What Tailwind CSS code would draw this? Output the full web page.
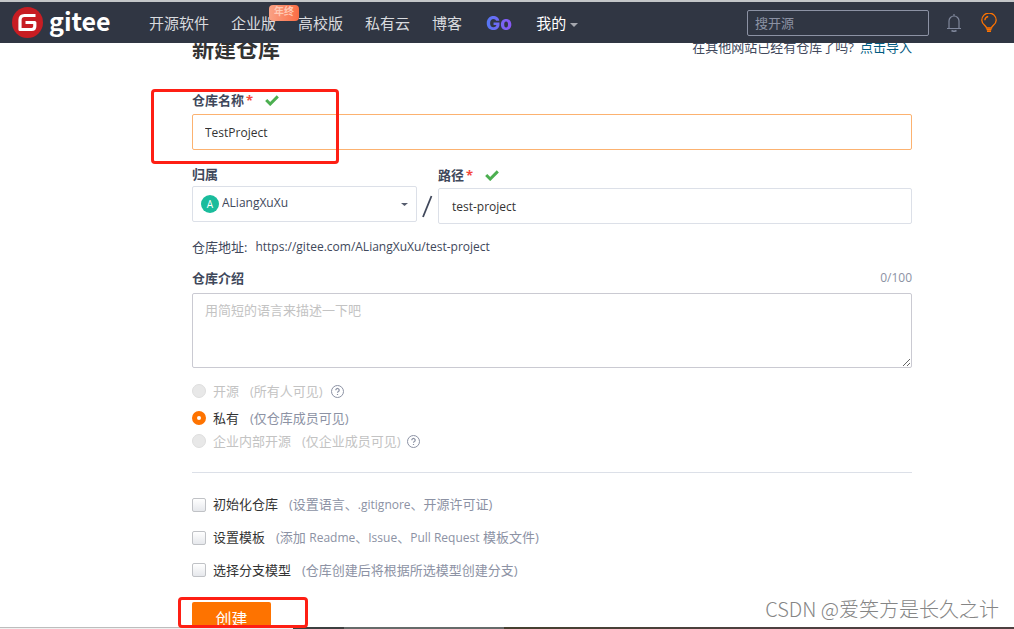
<!DOCTYPE html>
<html lang="zh-CN">
<head>
<meta charset="utf-8">
<meta name="viewport" content="width=device-width, initial-scale=1">
<title>新建仓库 - Gitee</title>
<script src="https://cdn.jsdelivr.net/npm/@tailwindcss/browser@4"></script>
</head>
<body class="relative h-screen overflow-hidden bg-white font-['Open_Sans','Noto_Sans_CJK_SC',sans-serif] text-[13px] leading-5 text-[#40485b]">

<header class="fixed inset-x-0 top-0 z-10 flex h-[43px] items-center border-t-2 border-[#c3c6c8] bg-[#303643] pr-[17px] pl-3 text-[15px] text-[#d9dbdf]">
  <a href="#" class="flex w-[137px] shrink-0 items-center gap-1.5 text-white" aria-label="gitee">
    <svg class="size-[31px]" viewBox="0 0 31 31" aria-hidden="true"><circle cx="15.500" cy="15.500" r="15.500" fill="#c71d23"/><path d="M23.500 8.500H12.500Q8 8.500 8 13V22.500H19.500Q22.800 22.500 22.800 19.200V15.500H13.500" fill="none" stroke="#fff" stroke-width="3.200" stroke-linejoin="round"/></svg>
    <span class="pb-1.5 font-['Noto_Sans_CJK_SC',sans-serif] text-[25px] leading-8 font-bold">gitee</span>
  </a>
  <nav class="flex items-center gap-[22px] whitespace-nowrap">
    <a href="#">开源软件</a>
    <a href="#" class="relative">企业版<span class="absolute -top-2 left-[38px] flex h-4 w-[30px] items-center justify-center rounded-sm bg-linear-to-r from-[#f9a184] to-[#fa6c43] pb-1 text-[10px] leading-none font-bold text-[#ffc9b4]">年终</span></a>
    <a href="#">高校版</a>
    <a href="#">私有云</a>
    <a href="#">博客</a>
    <a href="#" class="mx-0.5 bg-linear-to-r from-[#5078f4] to-[#8a55f5] bg-clip-text pt-0.5 font-[Inter,sans-serif] text-[19px] font-extrabold text-transparent">Go</a>
    <a href="#" class="flex items-center gap-1 text-white">我的<svg class="mt-1 h-1 w-2" viewBox="0 0 8 4" aria-hidden="true"><path d="M0 0h8L4 4z" fill="#a5a8af"/></svg></a>
  </nav>
  <div class="ml-auto flex items-center">
    <input type="search" aria-label="搜开源" placeholder="搜开源" class="h-[26px] w-[182px] rounded-xs border border-[#8c92a4] bg-transparent px-[7px] text-[13px] text-white placeholder:text-[#8c92a4]">
    <button type="button" aria-label="通知" class="ml-[17px]"><svg class="h-[18px] w-4" viewBox="0 0 16 18" fill="none" stroke="#7f879b" stroke-width="1.200" aria-hidden="true"><path d="M8 0v2M1 14.500h14M3 14.500V7a5 5 0 0 1 10 0v7.500"/><path d="M5.500 16.500q2.500 1.500 5 0" stroke-width="1.600"/></svg></button>
    <button type="button" aria-label="提示" class="ml-[19px]"><svg class="h-5 w-4" viewBox="0 0 16 20" fill="none" stroke="#fe7300" stroke-width="1.300" aria-hidden="true"><path d="M5.500 15c0-2-4.700-3.500-4.700-7.800a7.200 7.200 0 0 1 14.400 0c0 4.300-4.700 5.800-4.700 7.800zM3.800 7.200a4.200 4.200 0 0 1 3.400-3.700"/><path d="M5.500 16.500h5M6 18.300h4" stroke-width="1.500"/></svg></button>
  </div>
</header>

<main class="mr-[102px] ml-48 pt-[33px]">
  <div class="flex h-[30px] items-center justify-between">
    <h1 class="text-[22px] leading-[30px] font-bold text-[#333]">新建仓库</h1>
    <p class="flex gap-1.5 pb-0.5">在其他网站已经有仓库了吗? <a href="#" class="text-[#005980]">点击导入</a></p>
  </div>

  <form onsubmit="return false">
    <div class="relative mt-[27px]">
      <div class="flex items-center">
        <label for="name" class="flex gap-0.5 font-bold">仓库名称 <span class="text-[#f5483b]">*</span></label>
        <svg class="ml-3 h-[11px] w-[14px]" viewBox="0 0 14 11" fill="none" stroke="#4caf50" stroke-width="3" aria-hidden="true"><path d="M1.200 5l4 4L12.800 1.400"/></svg>
      </div>
      <input id="name" value="TestProject" class="mt-1 block h-9 w-full rounded-xs border border-[#fcb270] px-3 text-[12px] text-[#333]">
      <div class="pointer-events-none absolute -top-px -left-[41px] h-[75px] w-[188px] rounded-sm border-3 border-[#fe1f14]"></div>
    </div>

    <div class="mt-3.5 flex">
      <div class="w-[225px] shrink-0">
        <label for="owner" class="block font-bold">归属</label>
        <div class="relative mt-0.5">
          <select id="owner" class="h-9 w-full appearance-none rounded-xs border border-[#dce0e8] bg-white pr-6 pb-0.5 pl-[29px] text-[12px]"><option>ALiangXuXu</option></select>
          <span class="pointer-events-none absolute top-[9px] left-[9px] flex size-[18px] items-center justify-center rounded-full bg-[#1abc9c] text-[10px] leading-none text-white">A</span>
          <svg class="pointer-events-none absolute top-[17px] right-[9px] h-[3px] w-[7px]" viewBox="0 0 7 3" aria-hidden="true"><path d="M0 0h7L3.500 3z" fill="#565d6e"/></svg>
        </div>
      </div>
      <svg class="mt-[31px] h-[24px] w-[21px] shrink-0" viewBox="0 0 21 24" aria-hidden="true"><path d="M14.500 1L6 22" stroke="#40485b" stroke-width="1.800"/></svg>
      <div class="flex-1 pt-px">
        <div class="flex items-center">
          <label for="path" class="flex gap-0.5 font-bold">路径 <span class="text-[#f5483b]">*</span></label>
          <svg class="ml-3 h-[11px] w-[14px]" viewBox="0 0 14 11" fill="none" stroke="#4caf50" stroke-width="3" aria-hidden="true"><path d="M1.200 5l4 4L12.800 1.400"/></svg>
        </div>
        <input id="path" value="test-project" class="mt-[3px] block h-9 w-full rounded-xs border border-[#dce0e8] px-[13px] text-[12px] text-[#333]">
      </div>
    </div>

    <p class="mt-[13px] flex">仓库地址:<span class="ml-2 text-[12px]">https://gitee.com/ALiangXuXu/test-project</span></p>

    <div class="mt-[11px] flex items-end justify-between">
      <label for="intro" class="font-bold">仓库介绍</label>
      <span class="text-[12px] text-[#8c92a4]">0/100</span>
    </div>
    <textarea id="intro" placeholder="用简短的语言来描述一下吧" class="mt-[5px] block h-[75px] w-full resize-y rounded-xs border border-[#cacad2] px-3 py-1.5 placeholder:text-[#c3c3c3]"></textarea>

    <div class="mt-[13px] flex items-center text-[#c3c3c3]">
      <input type="radio" name="access" id="open" disabled class="size-3.5 appearance-none rounded-full border border-[#dedede] bg-[#e8e8e8]">
      <label for="open" class="ml-[7px] flex gap-[11px]"><span>开源</span><span>(所有人可见)</span></label>
      <svg class="ml-2 size-[13px]" viewBox="0 0 13 13" fill="none" stroke="#8c92a4" aria-hidden="true"><circle cx="6.500" cy="6.500" r="6"/><path d="M4.800 5.200a1.700 1.700 0 1 1 2.600 1.400q-.9.500-.9 1.200M6.500 8.900v1.200" stroke-width="1.200"/></svg>
    </div>
    <div class="mt-[7px] flex items-center text-[#333]">
      <input type="radio" name="access" id="private" checked class="size-3.5 appearance-none rounded-full border-[5px] border-[#fe7300] bg-white">
      <label for="private" class="ml-[7px] flex gap-[11px]"><span>私有</span><span class="text-[#8c92a4]">(仅仓库成员可见)</span></label>
    </div>
    <div class="mt-[3px] flex items-center text-[#c3c3c3]">
      <input type="radio" name="access" id="inner" disabled class="size-3.5 appearance-none rounded-full border border-[#dedede] bg-[#e8e8e8]">
      <label for="inner" class="ml-[7px] flex gap-[11px]"><span>企业内部开源</span><span>(仅企业成员可见)</span></label>
      <svg class="ml-1.5 size-[13px]" viewBox="0 0 13 13" fill="none" stroke="#8c92a4" aria-hidden="true"><circle cx="6.500" cy="6.500" r="6"/><path d="M4.800 5.200a1.700 1.700 0 1 1 2.600 1.400q-.9.500-.9 1.200M6.500 8.900v1.200" stroke-width="1.200"/></svg>
    </div>

    <hr class="mt-[21px] border-[#dce0e8]">

    <div class="mt-[21px] flex flex-col gap-3 text-[#333]">
      <div class="flex items-center">
        <input type="checkbox" id="init" class="size-3.5 appearance-none rounded-xs border border-[#c0c2c6] bg-linear-to-b from-white to-[#e6e8ec]">
        <label for="init" class="ml-[7px] flex gap-[11px]"><span>初始化仓库</span><span class="text-[#8c92a4]">(设置语言、<span class="text-[12px]">.gitignore</span>、开源许可证)</span></label>
      </div>
      <div class="flex items-center">
        <input type="checkbox" id="tpl" class="size-3.5 appearance-none rounded-xs border border-[#c0c2c6] bg-linear-to-b from-white to-[#e6e8ec]">
        <label for="tpl" class="ml-[7px] flex gap-[11px]"><span>设置模板</span><span class="text-[#8c92a4]">(添加 <span class="text-[12px]">Readme</span>、<span class="text-[12px]">Issue</span>、<span class="text-[12px]">Pull Request</span> 模板文件)</span></label>
      </div>
      <div class="flex items-center">
        <input type="checkbox" id="branch" class="size-3.5 appearance-none rounded-xs border border-[#c0c2c6] bg-linear-to-b from-white to-[#e6e8ec]">
        <label for="branch" class="ml-[7px] flex gap-[11px]"><span>选择分支模型</span><span class="text-[#8c92a4]">(仓库创建后将根据所选模型创建分支)</span></label>
      </div>
    </div>

    <div class="relative mt-[22px]">
      <button type="submit" class="block h-[34px] w-[79px] rounded-xs bg-[#fe7300] text-base text-white">创建</button>
      <div class="pointer-events-none absolute -top-[5px] -left-[14px] z-10 h-[31px] w-[130px] rounded-sm border-3 border-[#fe1f14]"></div>
    </div>
  </form>
</main>

<p class="absolute right-[15px] bottom-2 font-['Noto_Sans_CJK_SC',sans-serif] text-xl leading-6 font-light text-[#858585]">CSDN @爱笑方是长久之计</p>
<div class="fixed inset-x-0 bottom-0 flex h-0.5">
  <div class="w-[293px] border-t border-[#bdbdbd] bg-[#f1f1f1]"></div>
  <div class="w-[51px] bg-[#3c4040]"></div>
  <div class="w-40 bg-[#666b6a]"></div>
  <div class="flex-1 bg-linear-to-r from-[#45402f] to-[#4d4040] to-50%"></div>
</div>
</body>
</html>
